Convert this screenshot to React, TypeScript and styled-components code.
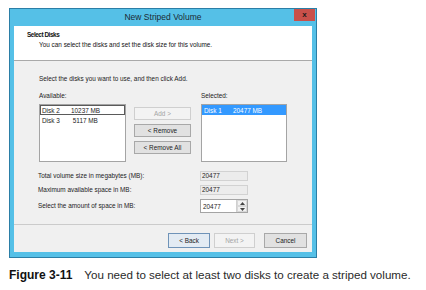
import React from "react";
import styled, { createGlobalStyle } from "styled-components";

const GlobalStyle = createGlobalStyle`
  html, body {
    margin: 0;
    padding: 0;
    background: #ffffff;
    font-family: "Liberation Sans", Arial, sans-serif;
  }
`;

const Page = styled.div`
  width: 426px;
  height: 290px;
  padding: 8px 0 0 9px;
  box-sizing: border-box;
`;

const Window = styled.div`
  width: 308px;
  box-sizing: border-box;
  border: 1px solid #2b7ea6;
  background: #55c0e7;
  display: flex;
  flex-direction: column;
`;

const TitleBar = styled.div`
  height: 17px;
  display: grid;
  grid-template-columns: 1fr auto 1fr;
  align-items: start;
`;

const TitleText = styled.div`
  grid-column: 2;
  font-size: 8.5px;
  line-height: 17px;
  color: #1b2a33;
`;

const CloseButton = styled.div`
  grid-column: 3;
  justify-self: end;
  width: 21px;
  height: 12px;
  margin-right: 1px;
  background: #c9504a;
  display: flex;
  align-items: center;
  justify-content: center;
  color: #1a1a1a;
  font-size: 8px;
  font-weight: bold;
  line-height: 1;
`;

const Client = styled.div`
  margin: 0 4px 5px 4px;
  background: #f0f0f0;
  display: flex;
  flex-direction: column;
`;

const Header = styled.div`
  height: 35px;
  box-sizing: border-box;
  background: #ffffff;
  border-bottom: 1px solid #a9a9a9;
  padding: 5px 0 0 13px;
  display: flex;
  flex-direction: column;
  gap: 2px;
  color: #111;
`;

const HeaderTitle = styled.div`
  font-size: 6.4px;
  font-weight: bold;
  letter-spacing: -0.45px;
  line-height: 8px;
`;

const HeaderSub = styled.div`
  font-size: 6.4px;
  line-height: 8px;
  padding-left: 12px;
`;

const Body = styled.div`
  padding: 14px 0 0 0;
  display: flex;
  flex-direction: column;
  color: #1c1c1c;
  font-size: 6.4px;
`;

const Instruction = styled.div`
  line-height: 8px;
  padding-left: 25px;
`;

const DiskRow = styled.div`
  display: flex;
  margin-top: 9px;
  padding-left: 25px;
`;

const ListColumn = styled.div`
  display: flex;
  flex-direction: column;
  gap: 4px;
`;

const Label = styled.div`
  line-height: 8px;
`;

const ListBox = styled.div<{ $w: number }>`
  width: ${(p) => p.$w}px;
  height: 58px;
  box-sizing: border-box;
  background: #ffffff;
  border: 1px solid #a4a4a4;
  display: flex;
  flex-direction: column;
`;

const ListItem = styled.div<{ $selected?: boolean; $focused?: boolean }>`
  height: 10px;
  box-sizing: border-box;
  display: grid;
  grid-template-columns: 29px auto;
  align-items: center;
  padding-left: 1px;
  background: ${(p) => (p.$selected ? "#3399ff" : "transparent")};
  color: ${(p) => (p.$selected ? "#ffffff" : "#1c1c1c")};
  border: 1px solid ${(p) => (p.$focused ? "#5a5a5a" : "transparent")};
`;

const ButtonColumn = styled.div`
  display: flex;
  flex-direction: column;
  gap: 4px;
  margin: 15px 10px 0 8px;
`;

const PushButton = styled.div<{ $w: number; $h: number; $disabled?: boolean; $default?: boolean }>`
  width: ${(p) => p.$w}px;
  height: ${(p) => p.$h}px;
  box-sizing: border-box;
  display: flex;
  align-items: center;
  justify-content: center;
  border: 1px solid
    ${(p) => (p.$disabled ? "#cfcfcf" : p.$default ? "#6f93b8" : "#a8a8a8")};
  background: ${(p) => (p.$disabled ? "#f3f3f3" : p.$default ? "#e3ebf3" : "#e1e1e1")};
  color: ${(p) => (p.$disabled ? "#a3a3a3" : "#1c1c1c")};
`;

const Fields = styled.div`
  display: grid;
  grid-template-columns: 162px 48px;
  grid-template-rows: 10px 10px 14px;
  row-gap: 4px;
  align-items: center;
  margin-top: 9px;
  padding-left: 24px;
`;

const FieldLabel = styled.div`
  line-height: 8px;
`;

const ReadBox = styled.div`
  height: 10px;
  box-sizing: border-box;
  border: 1px solid #d2d2d2;
  background: #ececec;
  padding-left: 1px;
  line-height: 8px;
`;

const SpinBox = styled.div`
  height: 14px;
  box-sizing: border-box;
  border: 1px solid #a4a4a4;
  background: #ffffff;
  display: flex;
  align-items: center;
`;

const SpinValue = styled.div`
  flex: 1;
  padding-left: 2px;
`;

const SpinButtons = styled.div`
  width: 10px;
  height: 100%;
  display: flex;
  flex-direction: column;
  border-left: 1px solid #d0d0d0;
`;

const SpinArrow = styled.div`
  flex: 1;
  display: flex;
  align-items: center;
  justify-content: center;
  background: #f2f2f2;
  border: 1px solid #d8d8d8;
  box-sizing: border-box;
`;

const Divider = styled.div`
  height: 1px;
  background: #cbcbcb;
  margin-top: 11px;
`;

const Footer = styled.div`
  display: flex;
  justify-content: flex-end;
  padding: 8px 5px 4px 0;
`;

const FooterGap = styled.div<{ $w: number }>`
  width: ${(p) => p.$w}px;
`;

const Caption = styled.div`
  margin-top: 10px;
  font-size: 11.6px;
  line-height: 14px;
  color: #2a2a2a;
  white-space: nowrap;
`;

const CaptionLabel = styled.span`
  font-size: 12px;
  font-weight: bold;
  color: #111;
  margin-right: 12px;
`;

const Arrow = ({ up }: { up?: boolean }) => (
  <svg width="5" height="3" viewBox="0 0 5 3">
    <path d={up ? "M0 3 L2.5 0 L5 3 Z" : "M0 0 L2.5 3 L5 0 Z"} fill="#444" />
  </svg>
);

const App = () => {
  return (
    <>
      <GlobalStyle />
      <Page>
        <Window>
          <TitleBar>
            <TitleText>New Striped Volume</TitleText>
            <CloseButton>x</CloseButton>
          </TitleBar>
          <Client>
            <Header>
              <HeaderTitle>Select Disks</HeaderTitle>
              <HeaderSub>You can select the disks and set the disk size for this volume.</HeaderSub>
            </Header>
            <Body>
              <Instruction>Select the disks you want to use, and then click Add.</Instruction>
              <DiskRow>
                <ListColumn>
                  <Label>Available:</Label>
                  <ListBox $w={87}>
                    <ListItem $focused>
                      <span>Disk 2</span>
                      <span>10237 MB</span>
                    </ListItem>
                    <ListItem>
                      <span>Disk 3</span>
                      <span>&nbsp;5117 MB</span>
                    </ListItem>
                  </ListBox>
                </ListColumn>
                <ButtonColumn>
                  <PushButton $w={57} $h={13} $disabled>Add &gt;</PushButton>
                  <PushButton $w={57} $h={13}>&lt; Remove</PushButton>
                  <PushButton $w={57} $h={13}>&lt; Remove All</PushButton>
                </ButtonColumn>
                <ListColumn>
                  <Label>Selected:</Label>
                  <ListBox $w={86}>
                    <ListItem $selected>
                      <span>Disk 1</span>
                      <span>20477 MB</span>
                    </ListItem>
                  </ListBox>
                </ListColumn>
              </DiskRow>
              <Fields>
                <FieldLabel>Total volume size in megabytes (MB):</FieldLabel>
                <ReadBox>20477</ReadBox>
                <FieldLabel>Maximum available space in MB:</FieldLabel>
                <ReadBox>20477</ReadBox>
                <FieldLabel>Select the amount of space in MB:</FieldLabel>
                <SpinBox>
                  <SpinValue>20477</SpinValue>
                  <SpinButtons>
                    <SpinArrow>
                      <Arrow up />
                    </SpinArrow>
                    <SpinArrow>
                      <Arrow />
                    </SpinArrow>
                  </SpinButtons>
                </SpinBox>
              </Fields>
              <Divider />
              <Footer>
                <PushButton $w={42} $h={15} $default>&lt; Back</PushButton>
                <FooterGap $w={4} />
                <PushButton $w={41} $h={15} $disabled>Next &gt;</PushButton>
                <FooterGap $w={9} />
                <PushButton $w={43} $h={15}>Cancel</PushButton>
              </Footer>
            </Body>
          </Client>
        </Window>
        <Caption>
          <CaptionLabel>Figure 3-11</CaptionLabel>
          You need to select at least two disks to create a striped volume.
        </Caption>
      </Page>
    </>
  );
};

export default App;
